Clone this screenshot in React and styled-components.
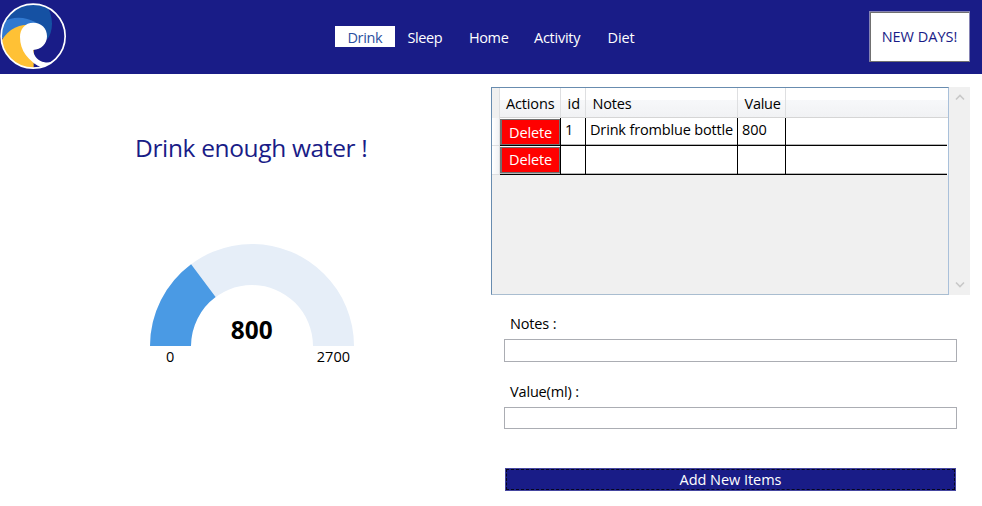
import React from "react";
import styled, { createGlobalStyle } from "styled-components";

const navy = "#191c87";

const GlobalStyle = createGlobalStyle`
  * { box-sizing: border-box; }
  body { margin: 0; background: #fff; }
  button, input { font: inherit; border-radius: 0; margin: 0; padding: 0; }
`;

const Page = styled.div`
  width: 982px;
  height: 506px;
  overflow: hidden;
  background: #fff;
  color: #000;
  font: 14.5px/20px "Open Sans", "Noto Sans", sans-serif;
`;

const Label = styled.span`
  white-space: nowrap;
  letter-spacing: ${(p) => p.$track || 0}px;
`;

const Header = styled.header`
  display: flex;
  align-items: flex-start;
  height: 74px;
  background: ${navy};
`;

const LogoBox = styled.div`
  width: 335px;
  height: 74px;
  svg { display: block; }
`;

const Nav = styled.nav`
  display: flex;
  width: 534px;
  padding-top: 26px;
`;

const NavItem = styled.a`
  display: block;
  width: ${(p) => p.$width}px;
  height: 21px;
  padding-left: 12.5px;
  line-height: 23px;
  color: ${(p) => (p.$active ? "#2b50a0" : "#fff")};
  background: ${(p) => (p.$active ? "#fff" : "transparent")};
`;

const NewDays = styled.button`
  width: 101px;
  height: 51px;
  margin-top: 11px;
  padding-top: 1px;
  border: 1px solid #707070;
  border-color: #8583b4 #8583b4 #707070 #8583b4;
  box-shadow: inset 1px 1px 0 #707070;
  background: #fff;
  color: ${navy};
`;

const Main = styled.main`
  display: flex;
  height: 432px;
`;

const Summary = styled.section`
  width: 491px;
  padding: 56px 0 0 135px;
`;

const Title = styled.h1`
  margin: 0;
  font-size: 24.5px;
  font-weight: 400;
  line-height: 36px;
  color: ${navy};
`;

const Gauge = styled.div`
  width: 204px;
  margin: 78px 0 0 15px;
  svg { display: block; }
`;

const Scale = styled.div`
  display: flex;
  justify-content: space-between;
  padding: 0 4px 0 16px;
  line-height: 22px;
`;

const Work = styled.section`
  width: 479px;
  padding-top: 13px;
`;

const GridRow = styled.div`
  display: flex;
  height: 208px;
`;

const DataGrid = styled.div`
  width: 458px;
  height: 208px;
  border: 1px solid #688caf;
  border-right-color: #a9c0da;
  border-bottom-color: #a9bdd0;
  background: #f0f0f0;
`;

const Row = styled.div`
  display: grid;
  grid-template-columns: 8px 61px 25px 152px 48px 161px;
`;

const HeadRow = styled(Row)`
  height: 30px;
  line-height: 32px;
  border-bottom: 1px solid #d5d5d5;
  background: linear-gradient(#fff 0 40%, #f7f8fa 40%, #f1f2f4);
`;

const HeadCell = styled.div`
  padding-left: ${(p) => p.$pad || 0}px;
  border-right: ${(p) => (p.$last ? 0 : 1)}px solid #dedfe1;
`;

const Stub = styled.div`
  background: ${(p) => (p.$head ? "#f0f0f0" : "linear-gradient(90deg, #fff, #f1f2f4)")};
  border-right: 1px solid #dedfe1;
  border-bottom: 1px solid #dedfe1;
`;

const BodyRow = styled(Row)`
  height: ${(p) => p.$height}px;
  background: linear-gradient(#fff, #fff) no-repeat;
`;

const Cell = styled.div`
  padding-left: 4px;
  line-height: 24px;
  border-right: ${(p) => (p.$last ? 0 : 1)}px solid #000;
  border-bottom: 1px solid #000;
  box-shadow: inset 0 -1px 0 #b5b5b5;
`;

const ActionCell = styled(Cell)`
  padding: 1px 0 0 0;
`;

const Delete = styled.button`
  display: block;
  width: 60px;
  height: 26px;
  border: 1px solid #707070;
  border-width: 1px 1px 1px 2px;
  background: #f00;
  color: #fff;
  line-height: ${(p) => p.$line}px;
`;

const ScrollBar = styled.div`
  display: flex;
  flex-direction: column;
  justify-content: space-between;
  align-items: center;
  width: 21px;
  height: 208px;
  padding: 6px 0;
  background: #f0f0f0;
  svg { display: block; }
`;

const Form = styled.form`
  width: 466px;
  padding: 19px 0 0 13px;
`;

const Field = styled.label`
  display: block;
  height: 68px;
`;

const FieldName = styled.div`
  height: 25px;
  padding-left: 6px;
`;

const Input = styled.input`
  display: block;
  width: 453px;
  height: ${(p) => p.$height}px;
  border: 1px solid #abadb3;
  outline: 0;
`;

const Submit = styled.button`
  display: block;
  width: 451px;
  height: 23px;
  margin: 18px 0 0 1px;
  padding: 1px;
  border: 1px solid #4546a0;
  background: ${navy};
  color: #fff;
`;

const Focus = styled.span`
  display: block;
  height: 21px;
  margin: -1px;
  line-height: 20px;
  border: 1px dashed #05061c;
`;

const nav = [
  ["Drink", 60, -0.4],
  ["Sleep", 61.5, -0.4],
  ["Home", 65, -0.4],
  ["Activity", 73.5, -0.25],
  ["Diet", 60, -0.1],
];

const Logo = () => (
  <svg width="80" height="74" viewBox="0 0 240 222">
    <defs>
      <clipPath id="disc"><circle cx="99.5" cy="108.5" r="96" /></clipPath>
    </defs>
    <g clipPath="url(#disc)">
      <path d="M0 90V0H130C153 30 162 66 152 98Q148 112 140 119L100 100Z" fill="#1551a3" />
      <path d="M0 115L8 66Q45 46 82 57Q131 69 141 112L100 110Z" fill="#3179d0" />
      <path d="M0 210V132Q10 108 33 90Q62 70 101 75V210Z" fill="#ffc135" />
      <path d="M100 68C75 68 60 87 60 111C60 151 83 184 130 205L198 180L175 172Q153 191 134 187C114 183 101 168 99 150C124 149 141 132 141 109C141 84 124 68 100 68Z" fill="#fff" />
      <path d="M150 208Q108 202 90 178Q111 200 150 208Z" fill="#fff" />
    </g>
    <circle cx="99.5" cy="108.5" r="96" fill="none" stroke="#fff" strokeWidth="5" />
  </svg>
);

const Chevron = ({ down }) => (
  <svg width="10" height="8" viewBox="0 0 10 8">
    <path d={down ? "M1 1.5L5 5.5L9 1.5" : "M1 6.5L5 2.5L9 6.5"} fill="none" stroke="#c8c8c8" strokeWidth="1.6" />
  </svg>
);

export default function App() {
  return (
    <Page>
      <GlobalStyle />
      <Header>
        <LogoBox><Logo /></LogoBox>
        <Nav>
          {nav.map(([name, width, track], i) => (
            <NavItem key={name} $width={width} $active={i === 0}>
              <Label $track={track}>{name}</Label>
            </NavItem>
          ))}
        </Nav>
        <NewDays><Label $track={0}>NEW DAYS!</Label></NewDays>
      </Header>
      <Main>
        <Summary>
          <Title><Label $track={-0.35}>Drink enough water !</Label></Title>
          <Gauge>
            <svg width="204" height="102" viewBox="0 0 204 102">
              <path d="M0 102A102 102 0 0 1 204 102H163A61 61 0 0 0 41 102Z" fill="#e6eef8" />
              <path d="M0 102A102 102 0 0 1 41.1 20.2L65.6 53.1A61 61 0 0 0 41 102Z" fill="#4a9ae4" />
              <text x="101.7" y="95" textAnchor="middle" fontSize="24.4" fontWeight="700">800</text>
            </svg>
            <Scale><Label>0</Label><Label>2700</Label></Scale>
          </Gauge>
        </Summary>
        <Work>
          <GridRow>
            <DataGrid>
              <HeadRow>
                <Stub $head />
                <HeadCell $pad={6}><Label $track={-0.15}>Actions</Label></HeadCell>
                <HeadCell $pad={6.5}><Label>id</Label></HeadCell>
                <HeadCell $pad={6.5}><Label $track={-0.15}>Notes</Label></HeadCell>
                <HeadCell $pad={6.5}><Label $track={-0.25}>Value</Label></HeadCell>
                <HeadCell $last />
              </HeadRow>
              <BodyRow $height={28}>
                <Stub />
                <ActionCell><Delete $line={26}><Label $track={-0.15}>Delete</Label></Delete></ActionCell>
                <Cell>1</Cell>
                <Cell><Label $track={-0.16}>Drink fromblue bottle</Label></Cell>
                <Cell>800</Cell>
                <Cell $last />
              </BodyRow>
              <BodyRow $height={29}>
                <Stub />
                <ActionCell><Delete $line={24}><Label $track={-0.15}>Delete</Label></Delete></ActionCell>
                <Cell /><Cell /><Cell /><Cell $last />
              </BodyRow>
            </DataGrid>
            <ScrollBar><Chevron /><Chevron down /></ScrollBar>
          </GridRow>
          <Form>
            <Field>
              <FieldName><Label $track={-0.15}>Notes :</Label></FieldName>
              <Input $height={23} />
            </Field>
            <Field>
              <FieldName><Label $track={-0.16}>Value(ml) :</Label></FieldName>
              <Input $height={22} />
            </Field>
            <Submit type="button"><Focus><Label $track={-0.05}>Add New Items</Label></Focus></Submit>
          </Form>
        </Work>
      </Main>
    </Page>
  );
}
